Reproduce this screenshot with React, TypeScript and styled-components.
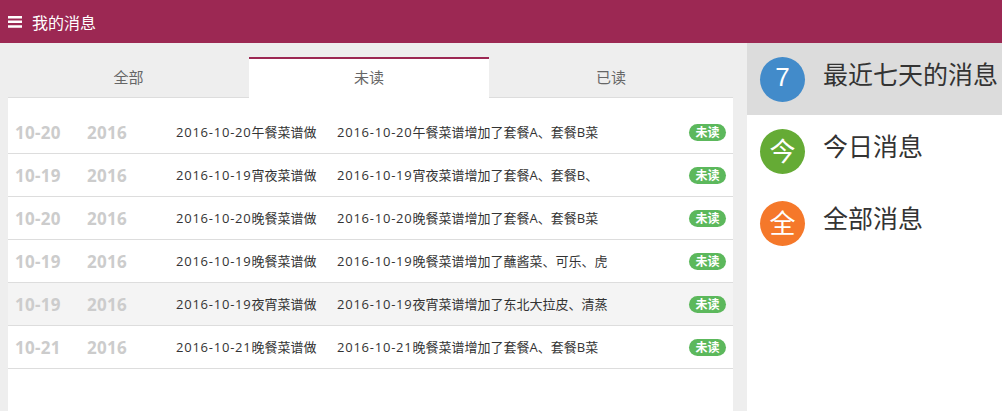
import React from 'react';
import styled, { createGlobalStyle } from 'styled-components';

const GlobalStyle = createGlobalStyle`
  html, body {
    margin: 0;
    padding: 0;
    height: 100%;
    overflow: hidden;
    background: #fff;
    font-family: 'Open Sans', 'Noto Sans CJK SC', sans-serif;
  }
  * { box-sizing: border-box; }
`;

const Page = styled.div`
  width: 1002px;
  height: 411px;
  display: flex;
  flex-direction: column;
  overflow: hidden;
`;

const Header = styled.header`
  height: 43px;
  flex: none;
  background: #9c2853;
  color: #fff;
  display: flex;
  align-items: center;
  padding-left: 8px;
  gap: 10px;
  font-size: 16px;
`;

const MenuIcon = styled.svg`
  width: 14px;
  height: 12px;
  display: block;
  margin-top: 1px;
`;

const Body = styled.div`
  flex: 1;
  display: flex;
  min-height: 0;
`;

const Main = styled.main`
  width: 747px;
  background: #eee;
  padding: 14px 14px 0 8px;
  display: flex;
  flex-direction: column;
`;

const Tabs = styled.div`
  display: grid;
  grid-template-columns: 241px 240px 244px;
  height: 41px;
  flex: none;
`;

const Tab = styled.div<{ $active?: boolean }>`
  display: flex;
  align-items: center;
  justify-content: center;
  padding-bottom: 3px;
  font-size: 15px;
  color: #666;
  background: ${(p) => (p.$active ? '#fff' : 'transparent')};
  border-top: 2px solid ${(p) => (p.$active ? '#9c2853' : 'transparent')};
  border-bottom: 1px solid ${(p) => (p.$active ? '#fff' : '#ddd')};
`;

const List = styled.div`
  flex: 1;
  background: #fff;
  padding-top: 13px;
`;

const Row = styled.div<{ $hover?: boolean }>`
  height: 43px;
  display: flex;
  align-items: center;
  padding: 0 7px 0 7px;
  border-bottom: 1px solid #ddd;
  background: ${(p) => (p.$hover ? '#f4f4f4' : '#fff')};
`;

const DateCell = styled.span`
  font-size: 17px;
  font-weight: 700;
  letter-spacing: 0.25px;
  color: #ccc;
  white-space: nowrap;
`;

const Day = styled(DateCell)`
  width: 72px;
`;

const Year = styled(DateCell)`
  width: 89px;
`;

const Title = styled.span`
  width: 161px;
  padding-bottom: 2px;
  font-size: 13px;
  color: #333;
  white-space: nowrap;
`;

const Summary = styled.span`
  flex: 1;
  padding-bottom: 2px;
  font-size: 13px;
  color: #333;
  white-space: nowrap;
`;

const Latin = styled.span`
  letter-spacing: 0.77px;
`;

const Badge = styled.span`
  width: 37px;
  height: 17px;
  border-radius: 9px;
  background: #5cb85c;
  color: #fff;
  font-size: 12px;
  font-weight: 700;
  display: flex;
  align-items: center;
  justify-content: center;
`;

const Side = styled.aside`
  width: 255px;
  background: #fff;
`;

const SideItem = styled.div<{ $active?: boolean }>`
  height: 72px;
  display: flex;
  align-items: center;
  padding-left: 13px;
  background: ${(p) => (p.$active ? '#dcdcdc' : '#fff')};
`;

const Circle = styled.span<{ $color: string }>`
  width: 45px;
  height: 45px;
  border-radius: 50%;
  flex: none;
  background: ${(p) => p.$color};
  color: #fff;
  font-family: 'Liberation Sans', 'Noto Sans CJK SC', sans-serif;
  font-size: 26px;
  display: flex;
  align-items: center;
  justify-content: center;
  padding-bottom: 3px;
  margin-right: 18px;
`;

const SideLabel = styled.span`
  font-family: 'Liberation Sans', 'Noto Sans CJK SC', sans-serif;
  font-size: 25px;
  color: #333;
  white-space: nowrap;
  padding-bottom: 12px;
`;

const messages = [
  { day: '10-20', date: '2016-10-20', title: '午餐菜谱做', text: '午餐菜谱增加了套餐A、套餐B菜' },
  { day: '10-19', date: '2016-10-19', title: '宵夜菜谱做', text: '宵夜菜谱增加了套餐A、套餐B、' },
  { day: '10-20', date: '2016-10-20', title: '晚餐菜谱做', text: '晚餐菜谱增加了套餐A、套餐B菜' },
  { day: '10-19', date: '2016-10-19', title: '晚餐菜谱做', text: '晚餐菜谱增加了蘸酱菜、可乐、虎' },
  { day: '10-19', date: '2016-10-19', title: '夜宵菜谱做', text: '夜宵菜谱增加了东北大拉皮、清蒸', hover: true },
  { day: '10-21', date: '2016-10-21', title: '晚餐菜谱做', text: '晚餐菜谱增加了套餐A、套餐B菜' },
];

const App: React.FC = () => (
  <Page>
    <GlobalStyle />
    <Header>
      <MenuIcon viewBox="0 0 14 12">
        <path d="M0 0h14v2.5H0zM0 4.6h14v2.5H0zM0 9.2h14v2.5H0z" fill="#fff" />
      </MenuIcon>
      我的消息
    </Header>
    <Body>
      <Main>
        <Tabs>
          <Tab>全部</Tab>
          <Tab $active>未读</Tab>
          <Tab>已读</Tab>
        </Tabs>
        <List>
          {messages.map((m) => (
            <Row key={m.date + m.title} $hover={m.hover}>
              <Day>{m.day}</Day>
              <Year>2016</Year>
              <Title><Latin>{m.date}</Latin>{m.title}</Title>
              <Summary><Latin>{m.date}</Latin>{m.text}</Summary>
              <Badge>未读</Badge>
            </Row>
          ))}
        </List>
      </Main>
      <Side>
        <SideItem $active>
          <Circle $color="#428bca">7</Circle>
          <SideLabel>最近七天的消息</SideLabel>
        </SideItem>
        <SideItem>
          <Circle $color="#65ab35">今</Circle>
          <SideLabel>今日消息</SideLabel>
        </SideItem>
        <SideItem>
          <Circle $color="#f5782a">全</Circle>
          <SideLabel>全部消息</SideLabel>
        </SideItem>
      </Side>
    </Body>
  </Page>
);

export default App;
